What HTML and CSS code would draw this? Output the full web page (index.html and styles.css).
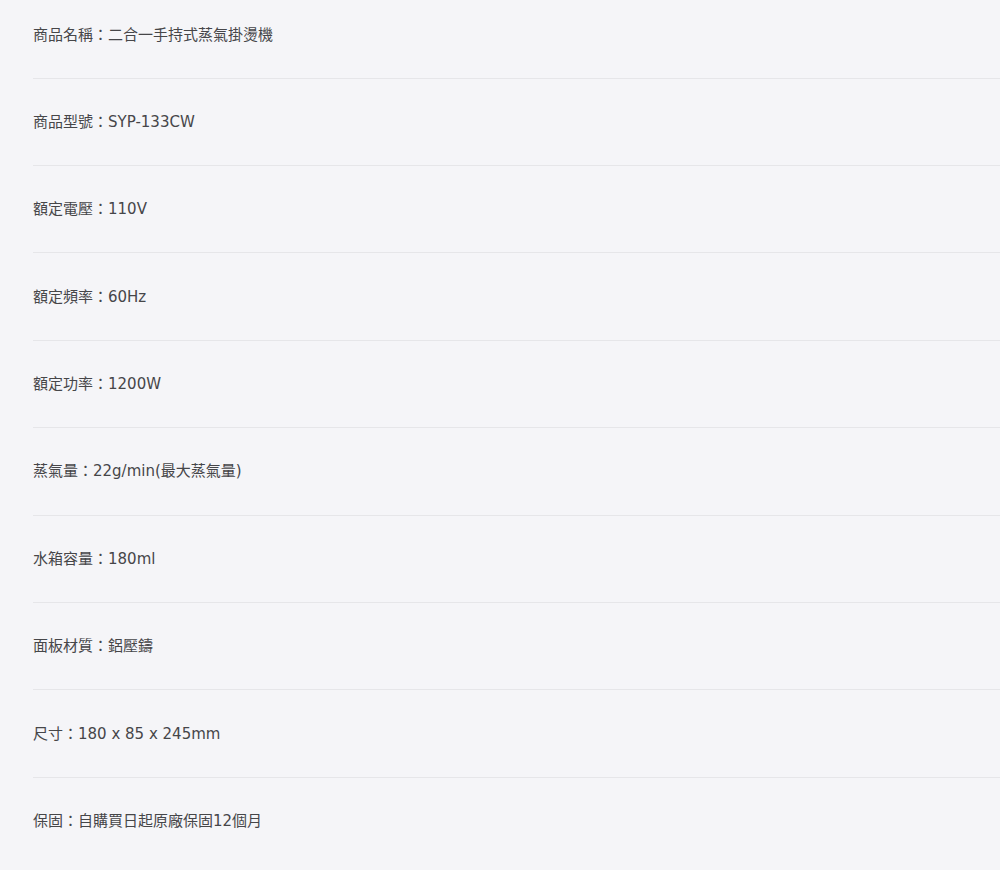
FILE: index.html
```html
<!DOCTYPE html>
<html lang="zh-Hant">
<head>
    <meta charset="UTF-8">
    <meta name="viewport" content="width=device-width, initial-scale=1.0">
    <title>商品規格</title>
    <link rel="stylesheet" href="styles.css">
</head>
<body>
    <ul class="spec-list">
        <li class="spec-row">商品名稱：二合一手持式蒸氣掛燙機</li>
        <li class="spec-row">商品型號：SYP-133CW</li>
        <li class="spec-row">額定電壓：110V</li>
        <li class="spec-row">額定頻率：60Hz</li>
        <li class="spec-row">額定功率：1200W</li>
        <li class="spec-row">蒸氣量：22g/min(最大蒸氣量)</li>
        <li class="spec-row">水箱容量：180ml</li>
        <li class="spec-row">面板材質：鋁壓鑄</li>
        <li class="spec-row">尺寸：180 x 85 x 245mm</li>
        <li class="spec-row">保固：自購買日起原廠保固12個月</li>
    </ul>
</body>
</html>
```

FILE: styles.css
```css
* {
    margin: 0;
    padding: 0;
    box-sizing: border-box;
}

body {
    background: #f5f5f8;
    color: #464649;
    font-family: 'DejaVu Sans', 'Noto Sans CJK TC', sans-serif;
    font-size: 15px;
    line-height: 24px;
}

.spec-list {
    list-style: none;
    padding-left: 33px;
}

.spec-row {
    padding: 31.2px 0;
    border-bottom: 1px solid #e6e6e9;
}

.spec-row:first-child {
    padding-top: 22.5px;
}

.spec-row:last-child {
    border-bottom: none;
}
```
